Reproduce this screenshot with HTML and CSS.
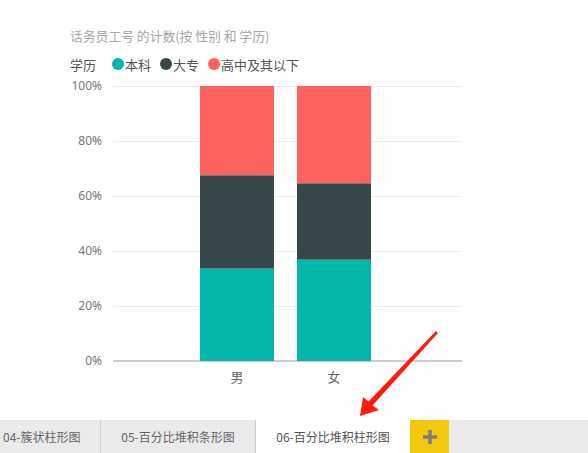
FILE: index.html
```html
<!DOCTYPE html>
<html>
<head>
<meta charset="utf-8">
<link rel="stylesheet" href="styles.css">
</head>
<body>
<div class="page">
  <div class="visual">
    <div class="title">话务员工号 的计数(按 性别 和 学历)</div>
    <div class="legend">
      <span class="legend-name">学历</span>
      <span class="legend-item"><i class="dot teal"></i>本科</span>
      <span class="legend-item"><i class="dot dark"></i>大专</span>
      <span class="legend-item"><i class="dot red"></i>高中及其以下</span>
    </div>
    <div class="chart">
      <div class="yaxis">
        <span>100%</span><span>80%</span><span>60%</span><span>40%</span><span>20%</span><span>0%</span>
      </div>
      <div class="plot-wrap">
        <div class="plot">
          <div class="bar">
            <div class="seg red" style="height:89px"></div>
            <div class="seg dark" style="height:93px"></div>
            <div class="seg teal" style="height:93px"></div>
          </div>
          <div class="bar">
            <div class="seg red" style="height:97px"></div>
            <div class="seg dark" style="height:76px"></div>
            <div class="seg teal" style="height:102px"></div>
          </div>
        </div>
        <div class="xaxis">
          <span>男</span><span>女</span>
        </div>
      </div>
    </div>
  </div>
  <div class="tabs">
    <div class="tab tab-first">04-簇状柱形图</div>
    <div class="tab tab-second">05-百分比堆积条形图</div>
    <div class="tab tab-active">06-百分比堆积柱形图</div>
    <div class="tab-add">
      <svg width="14" height="14" viewBox="0 0 14 14"><path d="M5.2 0h3.6v5.2H14v3.6H8.8V14H5.2V8.8H0V5.2h5.2z" fill="#7f7f7f"/></svg>
    </div>
  </div>
  <svg class="arrow" width="588" height="453" viewBox="0 0 588 453">
    <polygon points="360,416 363,397 368.5,401.5 436,331 438,333 372.5,405.5 379,410" fill="#ff1a0d"/>
  </svg>
</div>
</body>
</html>
```
FILE: styles.css
```css
* { box-sizing: border-box; }
html, body { margin: 0; padding: 0; background: #fff; }
body { font-family: "Noto Sans", "Noto Sans CJK SC", sans-serif; }
.page {
  position: relative;
  width: 588px;
  height: 453px;
  display: flex;
  flex-direction: column;
  overflow: hidden;
}
.visual {
  flex: 1;
  padding: 27px 0 0 70px;
}
.title {
  font-family: "Noto Sans CJK SC", sans-serif;
  font-size: 12.8px;
  line-height: 18px;
  color: #a6a6a6;
  white-space: nowrap;
}
.legend {
  margin-top: 10px;
  height: 18px;
  display: flex;
  align-items: center;
  font-family: "Noto Sans CJK SC", sans-serif;
  font-size: 13px;
  color: #555;
  white-space: nowrap;
}
.legend-name { margin-right: 16px; }
.legend-item {
  display: flex;
  align-items: center;
  margin-right: 9px;
}
.dot {
  width: 12px;
  height: 12px;
  border-radius: 50%;
  margin-right: 1px;
}
.teal { background: #01b8aa; }
.dark { background: #374649; }
.red { background: #fd625e; }
.chart {
  display: flex;
  margin-top: 6px;
}
.yaxis {
  width: 32px;
  height: 289px;
  display: flex;
  flex-direction: column;
  justify-content: space-between;
  align-items: flex-end;
  font-size: 12px;
  line-height: 14px;
  color: #777;
}
.plot-wrap {
  margin-left: 11px;
  width: 349px;
  padding-top: 7px;
}
.plot {
  height: 276px;
  display: flex;
  gap: 23px;
  padding-left: 87px;
  border-bottom: 2px solid #cccccc;
  background-image: linear-gradient(#ececec 1px, transparent 1px);
  background-size: 100% 55px;
}
.bar {
  width: 74px;
  height: 275px;
  display: flex;
  flex-direction: column;
}
.seg { width: 100%; }
.seg + .seg { border-top: 1px solid #6f7b7d; }
.xaxis {
  display: flex;
  gap: 23px;
  padding-left: 87px;
  margin-top: 6px;
  font-family: "Noto Sans CJK SC", sans-serif;
  font-size: 13px;
  line-height: 18px;
  color: #666;
}
.xaxis span {
  width: 74px;
  text-align: center;
}
.tabs {
  height: 33px;
  background: #eaeaea;
  display: flex;
  font-family: "Noto Sans CJK SC", sans-serif;
  font-size: 12px;
  color: #666;
}
.tab {
  height: 33px;
  display: flex;
  align-items: center;
  white-space: nowrap;
}
.tab-first {
  width: 101px;
  padding-left: 3px;
  border-right: 1px solid #cfcfcf;
}
.tab-second {
  width: 155px;
  justify-content: center;
  border-right: 1px solid #cfcfcf;
}
.tab-active {
  width: 154px;
  justify-content: center;
  background: #fff;
  color: #555;
}
.tab-add {
  width: 39px;
  height: 33px;
  background: #f2c80f;
  display: flex;
  align-items: center;
  justify-content: center;
}
.arrow {
  position: absolute;
  left: 0;
  top: 0;
  pointer-events: none;
}
```
